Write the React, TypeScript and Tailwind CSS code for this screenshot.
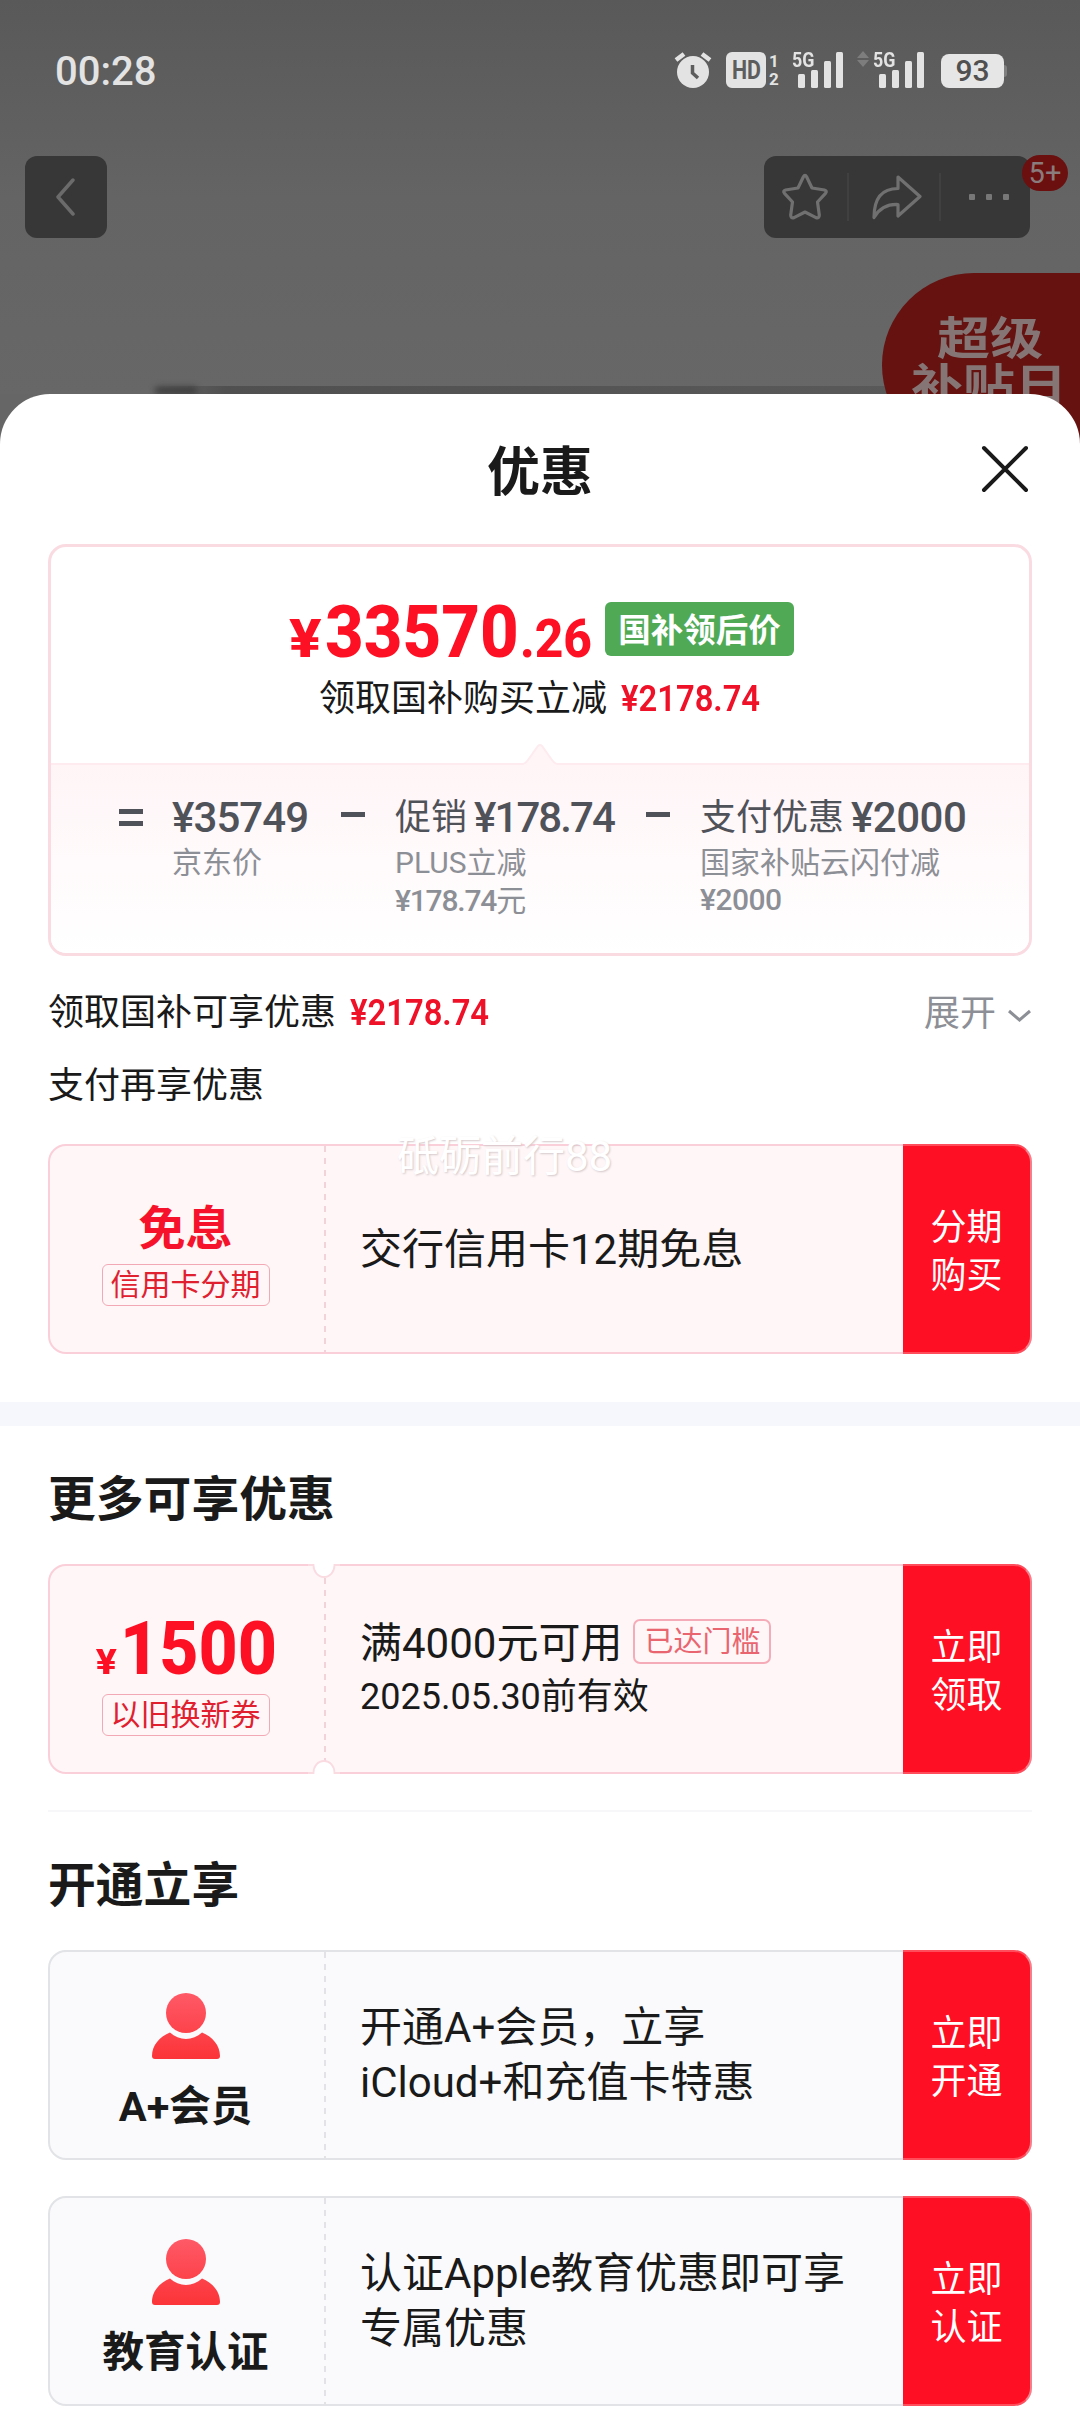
import type { ReactNode } from 'react'

interface CouponProps {
  left: ReactNode
  children: ReactNode
  action: [string, string]
  tone?: 'pink' | 'gray'
  notched?: boolean
}

function SignalIcon() {
  return (
    <div className="relative h-[38px] w-[52px]">
      <span className="absolute left-0 top-[-3px] origin-left scale-x-85 text-[21px] font-bold leading-[24px] text-[#e3e3e3]">5G</span>
      <svg width="52" height="38" viewBox="0 0 52 38" fill="#e3e3e3">
        <rect x="6" y="23" width="7" height="14" rx="1.5" />
        <rect x="19" y="19" width="7" height="18" rx="1.5" />
        <rect x="32" y="10" width="7" height="27" rx="1.5" />
        <rect x="44" y="1" width="7" height="36" rx="1.5" />
      </svg>
    </div>
  )
}

function StatusBar() {
  return (
    <div className="flex h-[142px] items-start justify-between pl-[55px] pr-[73px] pt-[51px]">
      <span className="pt-px text-[40px] font-medium leading-10 text-[#e3e3e3]">00:28</span>
      <div className="flex items-start">
        <svg width="38" height="38" viewBox="0 0 38 38" className="mr-[14px]">
          <circle cx="19" cy="21" r="16" fill="#e3e3e3" />
          <path d="M2 9 L10 3 M36 9 L28 3" stroke="#e3e3e3" strokeWidth="4.5" fill="none" />
          <path d="M18.5 14 V22 L24 27" stroke="#5d5d5d" strokeWidth="3.5" fill="none" />
        </svg>
        <svg width="54" height="38" viewBox="0 0 54 38" className="mr-[12px]" fontFamily="Roboto, sans-serif" fontWeight="700">
          <rect x="0" y="1" width="40" height="36" rx="6" fill="#e3e3e3" />
          <text x="6" y="28" fontSize="25" fill="#5d5d5d" textLength="29" lengthAdjust="spacingAndGlyphs">HD</text>
          <text x="43" y="16" fontSize="17" fill="#e3e3e3">1</text>
          <text x="43" y="34" fontSize="17" fill="#e3e3e3">2</text>
        </svg>
        <SignalIcon />
        <svg width="12" height="38" viewBox="0 0 12 38" className="ml-[13px] mr-[4px]" fill="#7d7d7d">
          <path d="M6 0 L12 7 H0 Z M6 16 L12 9 H0 Z" />
        </svg>
        <SignalIcon />
        <div className="ml-[16px] mt-[3px] flex h-[34px] w-[63px] items-center justify-center rounded-[8px] bg-[#e6e6e6] text-[30px] font-medium leading-[34px] text-[#505050]">
          93
        </div>
        <div className="mt-[14px] h-[12px] w-[3px] rounded-r bg-[#808080]" />
      </div>
    </div>
  )
}

function Toolbar() {
  return (
    <div className="flex justify-between pl-[25px] pr-[50px] pt-[14px]">
      <button className="flex h-[82px] w-[82px] items-center justify-center rounded-xl bg-[#373737]">
        <svg width="22" height="38" viewBox="0 0 22 38" fill="none" stroke="#6b6b6b" strokeWidth="3.5" strokeLinecap="round" strokeLinejoin="round">
          <path d="M18 2 L3 19 L18 36" />
        </svg>
      </button>
      <div className="relative flex h-[82px] w-[266px] items-center rounded-xl bg-[#373737]">
        <div className="flex w-[85px] justify-center border-r-2 border-[#404040]">
          <svg width="48" height="48" viewBox="0 0 48 48" fill="none" stroke="#707070" strokeWidth="3.2" strokeLinejoin="round" className="-ml-[2px]">
            <path d="M22.4 3.8 Q24 0.8 25.6 3.8 L31 15 L43.5 17 Q46.5 17.8 44.5 20.3 L36.5 29 L38.3 42 Q38.3 45.6 35 44.6 L24 39 L13 44.6 Q9.7 45.6 9.7 42 L11.5 29 L3.5 20.3 Q1.5 17.8 4.5 17 L17 15 Z" />
          </svg>
        </div>
        <div className="flex w-[92px] justify-center border-r-2 border-[#404040] pl-[5px]">
          <svg width="50" height="48" viewBox="0 0 50 48" fill="none" stroke="#707070" strokeWidth="3.2" strokeLinejoin="round">
            <path d="M26 4 L48 23.5 L26 43 V31.5 C14 31 7 36 2 44.5 C2 28 8 15.5 26 15.5 Z" />
          </svg>
        </div>
        <div className="flex flex-1 justify-center gap-[11px] pl-[6px]">
          <i className="h-[6px] w-[6px] rounded-[1px] bg-[#777]" />
          <i className="h-[6px] w-[6px] rounded-[1px] bg-[#777]" />
          <i className="h-[6px] w-[6px] rounded-[1px] bg-[#777]" />
        </div>
        <span className="absolute -right-[38px] -top-[1px] flex h-[36px] w-[46px] items-center justify-center rounded-full bg-[#6b0f0f] text-[29px] leading-[36px] text-[#8a7c7c]">
          5+
        </span>
      </div>
    </div>
  )
}

function CloseIcon() {
  return (
    <svg width="48" height="48" viewBox="0 0 48 48" fill="none" stroke="#1a1a1a" strokeWidth="4" strokeLinecap="round">
      <path d="M3 3 L45 45 M45 3 L3 45" />
    </svg>
  )
}

function UserIcon() {
  return (
    <svg width="70" height="68" viewBox="0 0 70 68">
      <defs>
        <linearGradient id="user" x1="0" y1="0" x2="0" y2="68" gradientUnits="userSpaceOnUse">
          <stop offset="0" stopColor="#ff5a68" />
          <stop offset="1" stopColor="#fb3337" />
        </linearGradient>
      </defs>
      <circle cx="35" cy="21" r="20" fill="url(#user)" />
      <path d="M19 40.5 C28 49 42 49 51 40.5 C61 44.5 69 53 69 64 Q69 67 66 67 H4 Q1 67 1 64 C1 53 9 44.5 19 40.5 Z" fill="url(#user)" />
    </svg>
  )
}

// The half circle bitten out of a coupon's edge, over its dashed line
function Notch({ bottom }: { bottom?: boolean }) {
  return (
    <svg
      width="40"
      height="14"
      viewBox="0 0 40 14"
      fill="none"
      className={bottom ? 'absolute -bottom-[2px] left-[254px] rotate-180' : 'absolute -top-[2px] left-[254px]'}
    >
      <path d="M9 0 V3 C10 9 14 13 20 13 C26 13 30 9 31 3 V0 Z" fill="#fff" />
      <path d="M4 1 H9.500 C9.500 8 14 13 20 13 C26 13 30.500 8 30.500 1 H36" stroke="#fadbe2" strokeWidth="1.8" />
    </svg>
  )
}

function Coupon({ left, children, action, tone = 'pink', notched }: CouponProps) {
  const pink = tone === 'pink'
  return (
    <div className={`relative flex h-[210px] rounded-[18px] border-2 ${pink ? 'border-[#fbcfd9] bg-[#fef6f7]' : 'border-[#e2e3e6] bg-[#fafafc]'}`}>
      <div className="flex w-[274px] flex-col items-center pr-[3px]">{left}</div>
      <svg width="2" height="206" className="shrink-0">
        <line x1="1" y1="0" x2="1" y2="206" stroke={pink ? '#f3d3da' : '#e2e2e7'} strokeWidth="2" strokeDasharray="6 6" />
      </svg>
      <div className="flex flex-1 flex-col justify-center pl-[34px] text-[42px] leading-[55px] text-[#1a1a1a]">
        {children}
      </div>
      <button className="-my-[2px] -mr-[2px] flex w-[129px] flex-col items-center justify-center rounded-r-[18px] border-y-2 border-r-2 border-y-[#ff4d5c] border-r-[#f4808c] bg-[#ff0f23] pt-[5px] text-[36px] leading-[48px] text-white">
        <span>{action[0]}</span>
        <span>{action[1]}</span>
      </button>
      {notched && <Notch />}
      {notched && <Notch bottom />}
    </div>
  )
}

function Tag({ children }: { children: ReactNode }) {
  return (
    <span className="flex h-[42px] w-[168px] shrink-0 items-center justify-center rounded-[6px] border border-[#f3a9b5] text-[30px] leading-[40px] text-[#e0202f]">
      {children}
    </span>
  )
}

function PriceCard() {
  return (
    <div className="h-[412px] overflow-hidden rounded-[18px] border-[3px] border-[#fadbe2]">
      <div className="h-[216px] pt-[45px]">
        <div className="flex h-[80px] pl-[238px] text-[#fd1023]">
          <div className="flex items-baseline font-extrabold leading-[80px]">
            <span className="w-[36px] origin-left scale-x-112 text-[54px]">¥</span>
            <span className="w-[195px] origin-left scale-x-92 text-[73px]">33570</span>
            <span className="w-[85px] origin-left scale-x-92 text-[54px]">.26</span>
          </div>
          <span className="mt-[10px] flex h-[54px] w-[189px] items-center justify-center rounded-[6px] bg-[#4fa955] pt-[4px] text-[32.500px] font-bold leading-[50px] text-white">
            国补领后价
          </span>
        </div>
        <div className="flex pl-[268px] pt-[1px] text-[36px] leading-[52px]">
          <span className="w-[302px] text-[#1a1a1a]">领取国补购买立减</span>
          <span className="origin-left scale-x-91 font-semibold text-[#ee1128]">¥2178.74</span>
        </div>
      </div>
      <div className="relative h-[190px] border-t-2 border-[#fdebef] bg-gradient-to-b from-[#fff5f7] to-white pt-[26px]">
        <svg width="34" height="23" viewBox="0 0 34 23" className="absolute -top-[22px] left-[472px]">
          <path d="M0 21 Q3 20 5 17 L15 3 Q17 1 19 3 L29 17 Q31 20 34 21 V23 H0 Z" fill="#fff5f7" />
          <path d="M0 21 Q3 20 5 17 L15 3 Q17 1 19 3 L29 17 Q31 20 34 21" fill="none" stroke="#fdebef" strokeWidth="2" />
        </svg>
        <div className="grid grid-cols-[56px_166px_57px_248px_57px_1fr] pl-[65px] text-[30px] leading-[38px] text-[#8d8f96]">
          <div className="pl-[3px] pt-[18px]">
            <div className="h-[5px] w-[24px] bg-[#505259]" />
            <div className="mt-[7px] h-[5px] w-[24px] bg-[#505259]" />
          </div>
          <div className="pt-[1px]">
            <p className="text-[42px] font-medium leading-[52px] tracking-[-0.900px] text-[#505259]">¥35749</p>
            <p>京东价</p>
          </div>
          <div className="pl-[3px] pt-[21px]">
            <div className="h-[5px] w-[24px] bg-[#505259]" />
          </div>
          <div className="pt-[1px]">
            <p className="flex text-[36px] leading-[52px] text-[#505259]">
              <span className="w-[79px]">促销</span>
              <span className="text-[42px] font-medium tracking-[-1.900px]">¥178.74</span>
            </p>
            <p>PLUS立减</p>
            <p><span className="font-medium tracking-[-1.200px]">¥178.74</span>元</p>
          </div>
          <div className="pl-[3px] pt-[21px]">
            <div className="h-[5px] w-[24px] bg-[#505259]" />
          </div>
          <div className="pt-[1px]">
            <p className="flex text-[36px] leading-[52px] text-[#505259]">
              <span className="w-[151px]">支付优惠</span>
              <span className="text-[42px] font-medium tracking-[-0.500px]">¥2000</span>
            </p>
            <p>国家补贴云闪付减</p>
            <p className="-mt-[1px] font-medium tracking-[-0.500px]">¥2000</p>
          </div>
        </div>
      </div>
    </div>
  )
}

export default function App() {
  return (
    <div className="relative h-[2412px] w-[1080px] overflow-hidden bg-[#666] font-[Roboto,'Noto_Sans_CJK_SC',sans-serif]">
      <header className="relative h-[394px] bg-gradient-to-b from-[#595959] via-[#646464] to-[#676767]">
        <StatusBar />
        <Toolbar />
        <div className="absolute left-[150px] top-[386px] h-[8px] w-[760px] bg-gradient-to-r from-transparent via-[#505050] via-10% to-[#595959]" />
        <div className="absolute left-[155px] top-[387px] h-[7px] w-[42px] rounded-full bg-[#3c3c3c] blur-[3px]" />
        <div className="absolute left-[882px] top-[273px] flex h-[184px] w-[198px] flex-col items-center rounded-l-[92px] bg-[#651210] pt-[43px] font-bold text-[#857675]">
          <span className="ml-[18px] h-[47px] scale-x-118 text-[45px] leading-[47px]">超级</span>
          <span className="ml-[16px] h-[47px] scale-x-118 whitespace-nowrap text-[44px] leading-[47px]">补贴日</span>
        </div>
      </header>

      <main className="relative h-[2018px] rounded-t-[50px] bg-white">
        <div className="relative flex h-[150px] items-center justify-center pt-[10px] text-[53px] font-bold text-[#1a1a1a]">
          优惠
          <button className="absolute right-[51px] top-[51px]"><CloseIcon /></button>
        </div>

        <section className="px-[48px]">
          <PriceCard />
          <div className="mt-[31px] flex items-center justify-between text-[36px] leading-[50px] text-[#1a1a1a]">
            <p className="flex">
              <span className="w-[302px]">领取国补可享优惠</span>
              <span className="origin-left scale-x-91 font-semibold text-[#ee1128]">¥2178.74</span>
            </p>
            <p className="flex items-center pt-[2px] text-[#8d8f96]">
              展开
              <svg width="25" height="14" viewBox="0 0 25 14" fill="none" stroke="#8d8f96" strokeWidth="3" className="ml-[11px] mt-[4px]">
                <path d="M2 2 L12.500 11 L23 2" />
              </svg>
            </p>
          </div>
          <p className="mt-[22px] text-[36px] leading-[50px] text-[#1a1a1a]">支付再享优惠</p>
          <div className="relative mt-[33px]">
            <Coupon
              action={['分期', '购买']}
              left={
                <>
                  <b className="mb-[7px] mt-[55px] text-[47px] leading-[56px] text-[#f5122a]">免息</b>
                  <Tag>信用卡分期</Tag>
                </>
              }
            >
              交行信用卡12期免息
            </Coupon>
            <span className="absolute -top-[13px] left-[349px] text-[42px] leading-[52px] text-white [text-shadow:1px_1px_2px_#d5c9cc]">
              砥砺前行88
            </span>
          </div>
        </section>

        <div className="mt-[48px] h-[24px] bg-[#f6f7fc]" />

        <section className="px-[48px]">
          <h2 className="flex h-[138px] items-center pt-[12px] text-[47.800px] font-bold text-[#1a1a1a]">更多可享优惠</h2>
          <Coupon
            notched
            action={['立即', '领取']}
            left={
              <>
                <p className="-mb-[9px] mt-[43px] flex items-baseline font-extrabold leading-[80px] text-[#fd1023]">
                  <span className="origin-right scale-x-112 text-[35px]">¥</span>
                  <span className="ml-[3px] w-[153px] origin-left scale-x-92 text-[74px]">1500</span>
                </p>
                <Tag>以旧换新券</Tag>
              </>
            }
          >
            <p className="flex items-center">
              满4000元可用
              <span className="-mt-[4px] ml-[11px] flex h-[45px] w-[138px] items-center justify-center rounded-[7px] border-2 border-[#f6acb8] pt-[2px] text-[29px] leading-[39px] text-[#e9656f]">
                已达门槛
              </span>
            </p>
            <p className="text-[36px] leading-[52px]">2025.05.30前有效</p>
          </Coupon>
          <div className="mt-[36px] h-[2px] bg-[#f7f7f9]" />
          <h2 className="flex h-[138px] items-center pt-[12px] text-[47.800px] font-bold text-[#1a1a1a]">开通立享</h2>
          <div className="space-y-9">
            <Coupon
              tone="gray"
              action={['立即', '开通']}
              left={
                <>
                  <div className="mt-[40px]"><UserIcon /></div>
                  <b className="mt-[19px] text-[41.500px] leading-[56px] text-[#1a1a1a]">A+会员</b>
                </>
              }
            >
              <p>开通A+会员，立享</p>
              <p>iCloud+和充值卡特惠</p>
            </Coupon>
            <Coupon
              tone="gray"
              action={['立即', '认证']}
              left={
                <>
                  <div className="mt-[40px]"><UserIcon /></div>
                  <b className="mt-[19px] text-[41.500px] leading-[56px] text-[#1a1a1a]">教育认证</b>
                </>
              }
            >
              <p>认证Apple教育优惠即可享</p>
              <p>专属优惠</p>
            </Coupon>
          </div>
        </section>
      </main>
    </div>
  )
}
